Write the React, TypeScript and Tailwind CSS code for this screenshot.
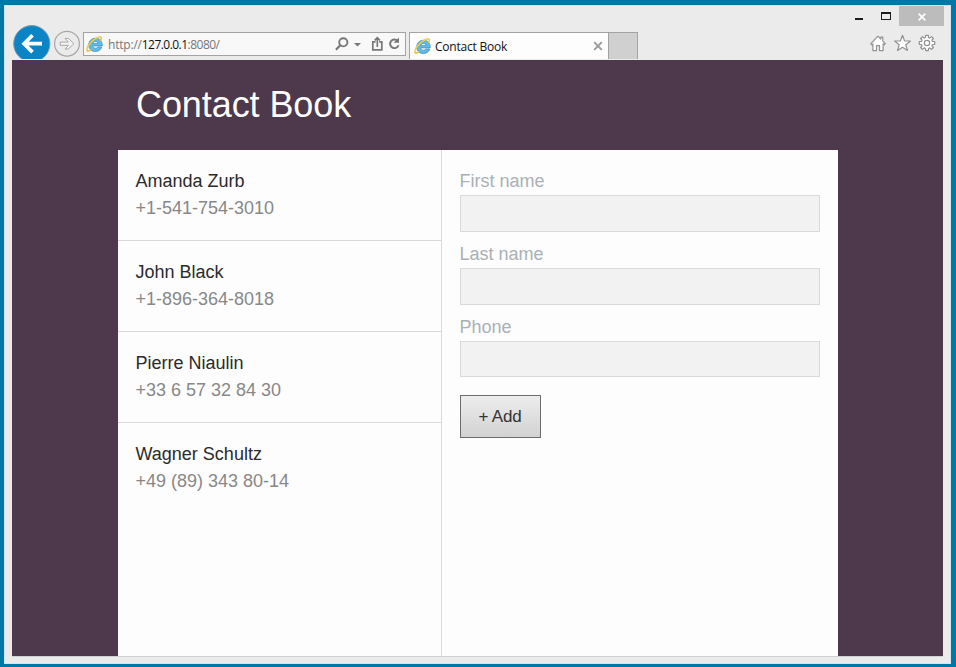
import React from "react";

const contacts = [
  { name: "Amanda Zurb", phone: "+1-541-754-3010" },
  { name: "John Black", phone: "+1-896-364-8018" },
  { name: "Pierre Niaulin", phone: "+33 6 57 32 84 30" },
  { name: "Wagner Schultz", phone: "+49 (89) 343 80-14" },
];

const fields = [
  { label: "First name", inputClass: "h-[37px]" },
  { label: "Last name", inputClass: "h-[37px]" },
  { label: "Phone", inputClass: "h-[36px]" },
];

function BrowserLogo() {
  return (
    <svg width="17" height="17" viewBox="0 0 17 17" fill="none" className="-ml-px mr-px shrink-0">
      <path
        d="M16.300 9.900H6.800c.2 1.500 1.200 2.300 2.700 2.300 1 0 1.700-.4 2.200-1.200h4.100c-.9 2.900-3.200 4.600-6.300 4.600-4.100 0-6.800-2.700-6.800-6.600 0-4 2.800-6.800 6.800-6.800 4.300 0 7 2.900 6.800 7.700zM6.900 7.400h5c-.2-1.300-1.100-2-2.500-2-1.300 0-2.200.7-2.500 2z"
        fill="#62b8e6"
        stroke="#3a8fc4"
        strokeWidth=".7"
        fillRule="evenodd"
      />
      <path
        d="M4.800 13.700C2.700 15.500 1.100 15.700 1 14.100.8 11.500 3.500 7.400 7 4.400c3.500-3 7.200-4.300 8.100-3 .4.700.2 1.700-.4 2.900"
        stroke="#e6c034"
        strokeWidth="1.400"
        strokeLinecap="round"
      />
      <path d="M1.400 13C1.600 10.700 4 7.200 7.100 4.600 10 2.200 12.800 1 14.100 1.300" stroke="#f8dd5c" strokeWidth=".7" />
    </svg>
  );
}

function TitleBar() {
  return (
    <div className="flex h-[19px] items-start justify-end pr-[6px]">
      <svg width="40" height="12" viewBox="0 0 40 12" className="mt-[4px] mr-[6px]" shapeRendering="crispEdges">
        <path d="M2 8h8v2H2z" fill="#1c1c1c" />
        <path d="M28 2h10v8H28zM29 4v5h8V4z" fill="#1c1c1c" fillRule="evenodd" />
      </svg>
      <div className="flex h-[20px] w-[45px] shrink-0 items-center justify-center bg-[#bcbcbc]">
        <svg width="8" height="8" viewBox="0 0 8 8" className="mt-px">
          <path d="M.7.7l6.600 6.600M7.300.7L.7 7.300" stroke="#fff" strokeWidth="1.700" />
        </svg>
      </div>
    </div>
  );
}

function Toolbar() {
  return (
    <div className="mb-px flex h-[34px] items-start overflow-hidden pl-[8px]">
      <svg width="38" height="35" viewBox="0 0 38 35" fill="none" className="shrink-0">
        <circle cx="18.800" cy="18.700" r="18.100" fill="#0a84c4" stroke="#7d98a6" strokeWidth="1" />
        <path d="M29 18.700H11M19.500 10.300l-8.400 8.400 8.400 8.400" stroke="#fff" strokeWidth="3.700" />
      </svg>
      <svg width="27" height="27" viewBox="0 0 27 27" fill="none" className="mt-[5px] ml-[3px] shrink-0">
        <circle cx="13" cy="13.700" r="12.400" stroke="#a6a6a6" strokeWidth="1.200" />
        <path
          d="M6.200 12.100h8.300l-3.500-3.700h3.400l5.400 5.300-5.400 5.300H11l3.500-3.700H6.200z"
          stroke="#a6a6a6"
          fill="#f4f4f4"
        />
      </svg>
      <div className="mt-[7px] ml-[2px] flex h-[24px] w-[323px] shrink-0 items-center border border-[#a3a3a3] bg-[#f8f8f8] pl-[3px]">
        <BrowserLogo />
        <div className="ml-[4px] pt-px font-['Open_Sans',sans-serif] text-[12px] leading-[20px] tracking-[-0.2px] whitespace-pre text-[#777]">
          http://<span className="tracking-[-0.55px] text-[#111]">127.0.0.1</span>
          <span className="tracking-[-0.5px]">:8080/</span>
        </div>
        <svg width="70" height="18" viewBox="0 0 70 18" fill="none" className="mr-[2px] ml-auto shrink-0">
          <circle cx="10.300" cy="7.300" r="4.100" stroke="#777" strokeWidth="1.900" />
          <path d="M7.300 10.300L2.900 14.700" stroke="#777" strokeWidth="2.200" />
          <path d="M21 8h7L24.500 11.500z" fill="#777" />
          <path d="M42.500 6.800H39.800v8h9v-8H46.100" stroke="#777" strokeWidth="1.700" />
          <path d="M44.300 12V3.500M41.700 5.400l2.600-2.700 2.600 2.700" stroke="#777" strokeWidth="1.600" />
          <path d="M64.600 5.900A4.300 4.300 0 1 0 65.500 10.200" stroke="#777" strokeWidth="1.900" />
          <path d="M66 2.500v5.300h-5.300z" fill="#777" />
        </svg>
      </div>
      <div className="mt-[7px] ml-[3px] flex h-[27px] w-[200px] shrink-0 items-center border border-b-0 border-[#a3a3a3] bg-[#fdfdfd] pr-[5px] pl-[5px]">
        <BrowserLogo />
        <div className="ml-[3px] pt-px font-['Open_Sans',sans-serif] text-[12px] leading-[20px] tracking-[-0.22px] text-[#111]">
          Contact Book
        </div>
        <svg width="10" height="10" viewBox="0 0 10 10" className="ml-auto">
          <path d="M1.200 1.200l7.600 7.600M8.800 1.200L1.200 8.800" stroke="#999" strokeWidth="1.900" />
        </svg>
      </div>
      <div className="mt-[7px] h-[27px] w-[29px] shrink-0 border border-b-0 border-l-0 border-[#a3a3a3] bg-[#d0d0d0]" />
      <svg
        width="68"
        height="20"
        viewBox="0 0 68 20"
        className="mt-[9px] mr-[12px] ml-auto shrink-0"
        fill="#fff"
        stroke="#929292"
        strokeWidth="1.200"
        strokeLinejoin="round"
      >
        <path d="M.8 9.700L8 2.200l2.800 2.800V3.200h2v3.900l2.500 2.600-1.100 1.100-1.100-1v6.800H9.500v-5h-3v5H2.900V9.800l-1 1z" />
        <path d="M32.500 1.300l2 5.500 5.900.2-4.600 3.700 1.600 5.800-4.900-3.300-4.900 3.300 1.600-5.800L24.600 7l5.900-.2z" />
        <g transform="translate(57 9)">
          <path
            d="M-1.500-5.500L-1.300-7.700h2.600l.2 2.200 1.300.6 1.700-1.500 1.900 1.900-1.500 1.700.6 1.300 2.200.2v2.600l-2.200.2-.6 1.300 1.500 1.700-1.900 1.900-1.700-1.500-1.300.6-.2 2.200h-2.600l-.2-2.200-1.300-.6-1.700 1.500-1.900-1.900 1.500-1.700-.6-1.300-2.200-.2v-2.600l2.200-.2.600-1.300-1.500-1.700 1.900-1.900 1.700 1.500z"
          />
          <circle r="2.700" />
        </g>
      </svg>
    </div>
  );
}

function ContactList() {
  return (
    <ul className="w-[324px] shrink-0 border-r border-[#d9d9dc]">
      {contacts.map((contact) => (
        <li key={contact.name} className="border-b border-[#d9d9dc] p-[18px] pl-[17.5px] last:border-b-0">
          <div className="text-[#2b2b2b]">{contact.name}</div>
          <div className="text-[#888]">{contact.phone}</div>
        </li>
      ))}
    </ul>
  );
}

function ContactForm() {
  return (
    <form className="flex flex-1 flex-col items-start gap-[9px] p-[18px]">
      {fields.map((field) => (
        <label key={field.label} className="block w-full text-[#a9b1b6]">
          <span className="-ml-[0.5px] block">{field.label}</span>
          <input
            className={`block w-full border border-[#dadade] bg-[#f2f2f3] px-2 outline-none ${field.inputClass}`}
          />
        </label>
      ))}
      <button
        type="button"
        className="mt-[9px] h-[43px] w-[81px] border border-[#6e6a6e] bg-linear-to-b from-[#ededed] to-[#d2d2d2] pr-px text-[17px] tracking-[-0.2px] text-[#333]"
      >
        + Add
      </button>
    </form>
  );
}

export default function App() {
  return (
    <div className="h-[667px] w-[956px] overflow-hidden bg-[#0078a7] pt-[5px] pr-[5px] pb-[3px] pl-[4px]">
      <div className="flex h-[659px] flex-col border border-[#cfe6ee] bg-[#ebebeb]">
        <TitleBar />
        <Toolbar />
        <main className="mx-[7px] flex h-[596px] flex-col overflow-hidden bg-[#4e384b] pr-px font-['Liberation_Sans',Arial,sans-serif] text-[18px] leading-[27px]">
          <h1 className="mt-[18px] ml-[124px] h-[72px] text-[36px] leading-[54px] tracking-[-0.08px] text-white">
            Contact Book
          </h1>
          <div className="ml-[106px] flex w-[720px] flex-1 bg-[#fdfdfd]">
            <ContactList />
            <ContactForm />
          </div>
        </main>
        <div className="mx-[7px] h-px shrink-0 bg-[#d2d2d2]" />
      </div>
    </div>
  );
}
